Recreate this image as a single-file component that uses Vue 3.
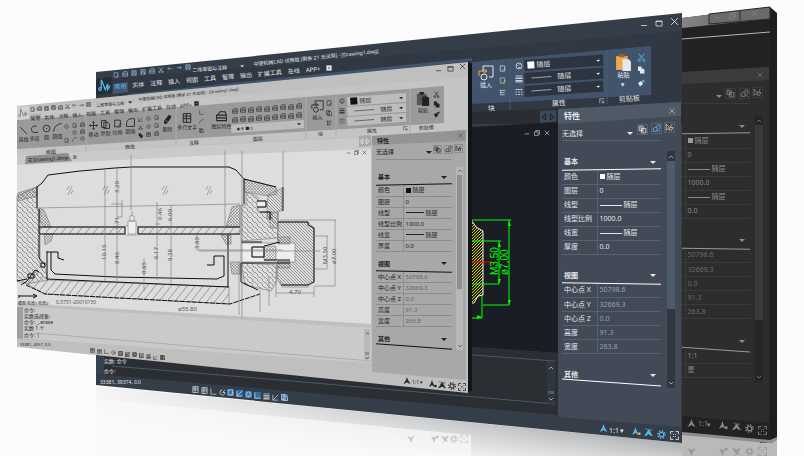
<template>
    <main>
        <svg class="scene" viewBox="0 0 804 456" role="img" aria-label="CAD">
            <defs>
                <linearGradient id="mirror" x1="0" y1="0" x2="1" y2="0">
                    <stop offset="0" stop-color="#f4f4f4" />
                    <stop offset="0.5" stop-color="#cfd0d1" />
                    <stop offset="1" stop-color="#a9abad" />
                </linearGradient>
                <linearGradient id="fade" gradientUnits="userSpaceOnUse" x1="389" y1="414" x2="385" y2="458">
                    <stop offset="0" stop-color="#fcfcfc" stop-opacity="0" />
                    <stop offset="1" stop-color="#fcfcfc" />
                </linearGradient>
                <linearGradient id="glass" x1="0" y1="0" x2="1" y2="0">
                    <stop offset="0" stop-color="#858585" />
                    <stop offset="1" stop-color="#5a5a5a" />
                </linearGradient>
                <pattern id="hatch" width="5" height="5" patternUnits="userSpaceOnUse">
                    <path d="M-1 1L4 6M1 -1L6 4" stroke="#666" stroke-width="0.6" />
                </pattern>
                <pattern id="wide" width="8" height="10" patternUnits="userSpaceOnUse">
                    <path d="M0 10L8 0M-4 5L0 0M4 15L8 10" stroke="#777" stroke-width="0.7" />
                </pattern>
                <pattern id="fine" width="3" height="3" patternUnits="userSpaceOnUse">
                    <path d="M0 0L3 3" stroke="#777" stroke-width="0.7" />
                </pattern>
                <pattern id="grain" width="3" height="3" patternUnits="userSpaceOnUse">
                    <path d="M0 3L3 0M0 0L3 3" stroke="#555" stroke-width="0.4" />
                </pattern>
                <pattern id="yellow" width="3" height="3" patternUnits="userSpaceOnUse">
                    <path d="M0 3L3 0M-1 1L1 -1M2 4L4 2" stroke="#e8e800" stroke-width="0.9" />
                </pattern>

                <symbol v-for="(d, id) in glyphs" :id="'i-' + id" :key="id" viewBox="0 0 16 16">
                    <path :d="d" fill="none" stroke="currentColor" stroke-width="1.5" />
                </symbol>
                <symbol id="i-insert" viewBox="0 0 16 16">
                    <path d="M5 7V1H15V12H11" fill="none" stroke="currentColor" />
                    <circle cx="6" cy="12" r="3" fill="none" stroke="currentColor" />
                    <path class="warm" d="M1 11V6H8M6 4L9 6L6 8" fill="none" />
                </symbol>
                <symbol id="i-paste" viewBox="0 0 16 16">
                    <path class="board" d="M1 2H12V15H1Z" />
                    <path class="clip" d="M4 0H9V3H4Z" />
                    <path d="M7 5H13L15 7V16H7Z" fill="currentColor" />
                </symbol>
                <symbol id="i-copy" viewBox="0 0 16 16">
                    <path d="M2 1H9V10H2Z" fill="currentColor" />
                    <path class="sheet" d="M6 5H12L15 8V15H6Z" fill="currentColor" />
                </symbol>
                <symbol id="i-brush" viewBox="0 0 16 16">
                    <path d="M2 8L8 4L12 10L6 15Z" fill="currentColor" />
                    <path class="tip" d="M9 4L14 1L15 4L12 8Z" />
                </symbol>
                <symbol id="i-eraser" viewBox="0 0 16 16">
                    <path d="M3 10L10 1L14 4L7 14L3 14Z" fill="currentColor" />
                    <path d="M5 9L9 12" stroke="#aaa" />
                </symbol>
                <symbol id="i-person" viewBox="0 0 16 16">
                    <path d="M8 0L10 6L15 14L10 12L8 10L6 12L1 14L6 6Z" fill="currentColor" />
                </symbol>
                <symbol id="i-personPlus" viewBox="0 0 16 16">
                    <path d="M6 0L8 6L12 14L8 12L6 10L4 12L0 14L4 6Z" fill="currentColor" />
                    <circle class="dot" cx="13" cy="12" r="2.5" />
                </symbol>
                <symbol id="i-personX" viewBox="0 0 16 16">
                    <path d="M8 3L15 14L10 12L8 10L6 12L1 14ZM2 1L14 5M14 1L8 7" fill="currentColor" stroke="currentColor" />
                </symbol>
                <symbol id="i-gear" viewBox="0 0 16 16">
                    <circle cx="8" cy="8" r="4" fill="none" stroke="currentColor" stroke-width="2" />
                    <circle cx="8" cy="8" r="6.5" fill="none" stroke="currentColor" stroke-width="2.5" stroke-dasharray="2.5 2.6" />
                </symbol>
                <symbol id="i-box" viewBox="0 0 16 16">
                    <path d="M1 1H15V15H1Z" fill="currentColor" />
                    <path d="M4 6H12L8 11Z" fill="#777" />
                </symbol>
            </defs>

            <!-- floor reflections -->
            <path d="M96 386L682 443V456H96Z" fill="url(#mirror)" />
            <path d="M682 433L777 440V456H682Z" fill="#b9b9b9" />
            <path d="M96 386L682 443V456H96Z" fill="url(#fade)" />
            <path d="M96 399L471 435V456H96Z" fill="#fafafa" fill-opacity="0.7" />
            <g class="ghost">
                <use v-for="(x, i) in [407, 431, 441, 450, 460]" :key="x" :href="'#i-' + status[i]"
                    :x="x" y="-443" width="8" height="8" transform="scale(1 -1)" />
                <use v-for="(x, i) in [687, 719, 732, 745, 758]" :key="x" :href="'#i-' + status[i]"
                    :x="x" y="-456" width="9" height="9" transform="scale(1 -1)" class="deep" />
            </g>

            <g v-for="win in windows" :key="win.name" :class="win.name">
                <path v-for="([kind, d], i) in win.shapes" :key="i" :class="kind" :d="d" />

                <!-- half-section of the part, light theme -->
                <g v-if="win.name === 'light'" class="drawing">
                    <path fill="url(#hatch)" d="M17 196L37 187V208L40 210V266L45 268L48 280L27 284L17 281Z" stroke="none" />
                    <path fill="url(#grain)" d="M18 193L37 187V196L18 201ZM39 208L44 210L51 227H44L39 220ZM44 234H53L51 241L45 245ZM226 227L232 207L240 205V227ZM221 235H231V244H226ZM230 262H240V274H232Z" />
                    <path fill="url(#wide)" d="M27 284L37 270L47 280L229 287V304L45 294Z" stroke="none" />
                    <path fill="url(#wide)" d="M39 227H240V234H39Z" stroke="none" />
                    <path fill="url(#grain)" d="M244 179L276 187L277 194L268 196L245 192Z" />
                    <path fill="url(#hatch)" d="M246 192L258 197V212H278V238L241 241V205H246ZM241 263L277 265V281L271 291L245 285Z" />
                    <path fill="url(#fine)" d="M268 195L282 188V211H278V228H270V212H267ZM278 222H308L314 228V282L308 285H281L277 278Z" />
                    <path fill="#eee" d="M241 243H295V262H241ZM252 247H264V257H252ZM257 201H266V207H257Z" />
                    <path fill="url(#grain)" d="M264 246H276V260H264ZM278 237H290V244H278ZM278 261H290V268H278ZM267 212H272V219H267Z" />
                    <path class="thick" d="M37 187L42 183L48 175L80 171L115 168L131 167H229L236 170L243 178M47 252H58V258L64 260M207 265H214V256H224V276L217 279L115 277L55 274L51 270V252" />
                    <path class="heavy" d="M37 186V208M39 209V227H240M39 234H240M39 227V234M39 235V258L45 265M47 251V279L229 287M228 235V287" />
                    <path class="heavy" d="M244 178V204M244 179L276 187M283 187V211M278 222H308V225L314 228V282L308 285H281M241 242H262M241 263H290M252 247H264V257H252ZM264 246L280 242M264 260H290M241 263V282L258 290M257 201H266V207H257M260 212H270V220M17 281L27 279M21 285L27 281L35 270L39 272" />
                    <path class="heavy dash" d="M26 285L45 294L230 304L260 294" />
                    <path d="M37 208L240 204M117 168V282M131 155V210M225 151V228M242 151V318M239 264V315M283 151V187M105 170V283M157 202V280M171 205V284M144 258V291M197 235V250H283M199 251H320M280 220H336M335 220V286H315M314 236H328M327 236V269H314M276 265V297M314 286V297M276 293H314M269 276V306M260 290V312M122 200V217H117M111 204H122M155 224H160" />
                    <path fill="#f6f6f6" stroke="#f6f6f6" d="M125 226H138V235H125Z" />
                    <path fill="#eee" d="M128 221H136V234H128ZM130 216H134V221H130ZM132 211V216" />
                    <path class="heavy" d="M125 227V234M138 227V234M19 295V298M19 296H36M33 294L37 296L33 298M28 274H34V278H28ZM41 263H45V267H41Z" />
                    <path v-for="x in [67, 103, 162, 206]" :key="x" :d="`M${x} 190l2 -4M${x + 1} 195l4 -9M${x + 4} 194l2 -4`" />
                    <path d="M280 281L282 287H308L312 281" />
                    <text v-for="[t, x, y] in sizes" :key="x + t" :transform="`translate(${x} ${y}) rotate(-90)`">{{ t }}</text>
                    <text x="178" y="311">ø55.80</text>
                    <text x="289" y="294">4.70</text>
                    <text class="code" x="56" y="304">0,5751-20010150</text>
                </g>

                <!-- same part, seen on the black canvas -->
                <g v-if="win.name === 'blue'" class="neon">
                    <path fill="url(#yellow)" stroke="#eee" d="M472 221L476 227L483 231V295L478 296L474 303H472" />
                    <path d="M472 220H511M509 220V305H483M472 241H501M499 241V284H472M482 296V318H472" />
                    <path fill="#0f0" stroke="none" d="M509 221L508 226H511ZM509 305L508 300H511ZM499 242L498 247H501ZM499 284L498 279H501ZM482 317L477 315V319Z" />
                    <path stroke="#f00" d="M472 262H492" />
                    <text transform="translate(498 275) rotate(-90)">M3.50</text>
                    <text transform="translate(508 275) rotate(-90)">ø7.00</text>
                </g>

                <foreignObject v-for="(tool, i) in win.tools" :key="i" :x="tool.x" :y="tool.y" :width="tool.s" :height="tool.s">
                    <button :class="['tool', tool.kind]" :aria-label="tool.label || tool.icon">
                        <svg :width="tool.s" :height="tool.s"><use :href="'#i-' + tool.icon" /></svg>
                        <span v-if="tool.label">{{ tool.label }}</span>
                    </button>
                </foreignObject>

                <text v-for="[t, x, y] in win.texts" :key="t + x + y" :transform="`translate(${x} ${y}) rotate(-4)`">{{ t }}</text>
                <text v-for="[t, x, y, kind] in win.notes" :key="t + x + y" :class="kind" :x="x" :y="y">{{ t }}</text>

                <template v-if="win.tabs">
                    <foreignObject :transform="`translate(${win.title.x} ${win.title.y}) rotate(-6)`" width="200" height="10">
                        <h1>中望机械CAD 试用版 [剩余 21 天试用] - [Drawing1.dwg]</h1>
                    </foreignObject>
                    <foreignObject :transform="`translate(${win.tabs.x} ${win.tabs.y}) rotate(-5)`" :width="win.tabs.w" height="10">
                        <nav>
                            <button v-for="(tab, i) in tabs" :key="tab" :class="{ current: i === 0 }">{{ tab }}</button>
                        </nav>
                    </foreignObject>
                    <foreignObject v-for="(box, i) in win.selects" :key="i" :width="box.w" :height="box.h"
                        :transform="`translate(${box.x} ${box.y}) rotate(-4)`">
                        <label class="pick" :class="box.mark">
                            <i></i>
                            <select :aria-label="box.label">
                                <option>{{ box.value }}</option>
                            </select>
                            <b></b>
                        </label>
                    </foreignObject>
                </template>

                <foreignObject :x="win.panel.x" :y="win.panel.y" :width="win.panel.w" height="300">
                    <section class="panel">
                        <div class="choice">
                            <select aria-label="选择">
                                <option>无选择</option>
                            </select>
                            <b></b>
                        </div>
                        <div v-for="group in groups" :key="group.name" class="group" :class="group.tilt">
                            <h2>{{ group.name }}<b></b></h2>
                            <table>
                                <tbody>
                                    <tr v-for="[key, value, mark] in group.rows" :key="key">
                                        <th>{{ key }}</th>
                                        <td :class="{ dim: group.dim }"><i v-if="mark" :class="mark"></i>{{ value }}</td>
                                    </tr>
                                </tbody>
                            </table>
                        </div>
                    </section>
                </foreignObject>
            </g>
        </svg>
    </main>
</template>

<script setup>
    const glyphs = {
        min: 'M2 13H14',
        max: 'M2 4H14V14H2ZM2 5H14',
        restore: 'M5 5V1H15V11H11M1 5H11V15H1Z',
        close: 'M2 2L14 14M14 2L2 14',
        line: 'M2 2L14 14',
        poly: 'M12 2C3 1 2 6 3 10C4 14 9 14 14 13',
        circle: 'M14 8A6 6 0 1 1 2 8A6 6 0 1 1 14 8M7 8H9M8 7V9',
        arc: 'M1 15C2 7 7 2 15 1',
        move: 'M8 1V15M1 8H15M6 3L8 1L10 3M6 13L8 15L10 13M3 6L1 8L3 10M13 6L15 8L13 10',
        pages: 'M1 1H9V13H1ZM5 4H12L15 7V15H5Z',
        corner: 'M1 15V8C2 3 6 1 15 1V15Z',
        cut: 'M3 1L11 11M13 1L5 11M2 13A2 2 0 1 0 6 13A2 2 0 1 0 2 13M10 13A2 2 0 1 0 14 13A2 2 0 1 0 10 13',
        layer: 'M3 5L6 1H13L15 5M1 6H15V14H1ZM1 10H15',
        palette: 'M14 8A6 6 0 1 1 2 8A6 6 0 1 1 14 8M5 7H7M9 5H11M6 11H11',
        weights: 'M1 2H15M1 6H15M1 7H15M1 11H15M1 12H15M1 14H15',
        dashes: 'M1 3H15M1 8H4M6 8H10M12 8H15M1 13H4M6 13H10M12 13H15',
        edit: 'M3 2H13V14H3ZM9 13L15 7',
        tree: 'M1 3H15M4 3V14M4 8H13M4 13H13',
        launch: 'M2 14V2H14M6 6L13 13M13 7V13H7',
        prev: 'M11 2V14L4 8Z',
        next: 'M5 2V14L12 8Z',
        filter: 'M2 2H9V10H2ZM6 6H14V14H6ZM4 4L10 12',
        pick: 'M2 13C1 7 5 5 9 5V13ZM8 2H14V9M10 9L14 14',
        quick: 'M2 2V13L5 10L9 13L7 7ZM13 2L9 8H14L11 14',
        grid: 'M2 1H14V15H2ZM2 5H14M2 9H14M7 1V15',
        ortho: 'M2 1V14H15',
        polar: 'M14 8A6 6 0 1 1 8 2M8 8L14 2M8 8H14',
        track: 'M2 14L14 2M2 2V14H14',
        save: 'M2 2H14V14H2ZM5 2V6H11V2M4 14V9H12V14',
        undo: 'M6 3L2 7L6 11M2 7H14',
        redo: 'M10 3L14 7L10 11M14 7H2',
        logo: 'M1 12C1 10 4 10 4 12C4 15 1 15 1 12M4 12V1L9 13L12 6L12 13L15 8',
        full: 'M6 1H1V6M10 1H15V6M6 15H1V10M10 15H15V10M5 5L7 7M11 5L9 7M5 11L7 9M11 11L9 9',
    }

    const status = ['person', 'personPlus', 'personX', 'gear', 'full']
    const tabs = ['常用', '实体', '注释', '插入', '视图', '工具', '管理', '输出', '扩展工具', '在线', 'APP+']

    const groups = [
        {
            name: '基本',
            tilt: 'rise',
            rows: [
                ['颜色', '随层', 'swatch'],
                ['图层', '0'],
                ['线型', '随层', 'long'],
                ['线型比例', '1000.0'],
                ['线宽', '随层', 'short'],
                ['厚度', '0.0'],
            ],
        },
        {
            name: '视图',
            tilt: 'sink',
            dim: true,
            rows: [
                ['中心点 X', '50798.6'],
                ['中心点 Y', '32669.3'],
                ['中心点 Z', '0.0'],
                ['高度', '91.3'],
                ['宽度', '263.8'],
            ],
        },
        { name: '其他', tilt: 'steep', rows: [['注释比例', '1:1'], ['打开..', '是']] },
    ]

    const sizes = [
        ['3.20', 119, 193], ['9.71', 119, 229], ['0.46', 162, 220], ['6.00', 172, 221],
        ['10.15', 106, 260], ['8.46', 119, 264], ['0.85', 146, 274], ['6.17', 158, 259],
        ['9.38', 172, 261], ['3.80', 199, 249], ['M3.50', 327, 264], ['ø7.00', 336, 264],
    ]

    // evenly spaced icons between two points
    const row = (icons, x, y, dx, dy, s, kind) =>
        icons.map((icon, i) => ({ icon, x: x + i * dx, y: Math.round(y + i * dy), s, kind }))

    const quickIcons = ['edit', 'layer', 'save', 'save', 'layer', 'cut', 'undo', 'redo', 'save']
    const snapIcons = ['grid', 'grid', 'ortho', 'polar', 'edit', 'track', 'palette', 'ortho', 'weights', 'track', 'pages']

    const windows = [
        {
            name: 'dark',
            shapes: [
                ['side', 'M770 7L777 13V437L772 443H760Z'],
                ['frame', 'M682 18L770 7V442L682 433Z'],
                ['glass', 'M682 18L770 7V19L682 28Z'],
                ['caps', 'M709 14L770 7V19L709 24ZM740 10V20'],
                ['hair', 'M682 39L770 32'],
                ['body', 'M682 72L769 67V423L682 416Z'],
                ['head', 'M682 72L769 67V80L682 84Z'],
                ['track', 'M755 116H763V382H755Z'],
                ['thumb', 'M755 125H763V320H755Z'],
                ['base', 'M682 432L770 440L772 439L777 437V440L772 443H768L682 435Z'],
                ['chev', 'M757 122L759 120L761 122M757 376L759 378L761 376'],
            ],
            tools: [
                { icon: 'min', x: 714, y: 12, s: 7 },
                { icon: 'restore', x: 729, y: 12, s: 7 },
                { icon: 'close', x: 751, y: 10, s: 7 },
                { icon: 'close', x: 757, y: 72, s: 6, kind: 'edge' },
                { icon: 'filter', x: 726, y: 89, s: 9, kind: 'edge' },
                { icon: 'pick', x: 740, y: 89, s: 9, kind: 'edge' },
                { icon: 'quick', x: 753, y: 88, s: 9, kind: 'edge' },
                { icon: 'person', x: 687, y: 419, s: 9 },
                { icon: 'personPlus', x: 719, y: 421, s: 9 },
                { icon: 'personX', x: 732, y: 422, s: 9 },
                { icon: 'gear', x: 745, y: 424, s: 9 },
                { icon: 'full', x: 758, y: 426, s: 9 },
            ],
            notes: [['1:1', 698, 426], ['▾', 707, 427]],
            panel: { x: 650, y: 89, w: 100 },
        },
        {
            name: 'blue',
            shapes: [
                ['frame', 'M96 72L682 13V443L96 385Z'],
                ['bar', 'M96 80L682 31V104L96 130Z'],
                ['on', 'M113 84L128 82V92L113 94Z'],
                ['logo', 'M96 79L112 77V93L96 95Z'],
                ['ribbon', 'M472 62L651 46V95L472 104ZM128 94L472 58V61L128 97Z'],
                ['strip', 'M472 112L682 103V124H472Z'],
                ['nav', 'M540 111L556 110V122L540 123Z'],
                ['canvas', 'M472 127L558 122V353L472 347Z'],
                ['command', 'M96 340L472 347L558 353V415L96 374Z'],
                ['gutter', 'M96 356H104V375L96 374Z'],
                ['hair', 'M112 366L280 380L555 404M472 355L555 361M510 59V110M607 50V104'],
                ['body', 'M558 109L681 102V427L558 417Z'],
                ['head', 'M558 109L681 102V116L558 124Z'],
                ['track', 'M667 151H675V388H667ZM547 361H555V404L547 403Z'],
                ['thumb', 'M667 161H675V309H667ZM548 391H554V394H548Z'],
                ['chev', 'M669 158L671 156L673 158M669 382L671 384L673 382M549 369L551 367L553 369M549 398L551 400L553 398'],
            ],
            tools: [
                { icon: 'logo', x: 98, y: 79, s: 13, kind: 'azure' },
                ...row(quickIcons, 113, 72, 9, -1, 6, 'quick'),
                { icon: 'box', x: 326, y: 65, s: 6 },
                { icon: 'min', x: 640, y: 19, s: 8 },
                { icon: 'max', x: 655, y: 19, s: 8 },
                { icon: 'close', x: 670, y: 17, s: 9 },
                { icon: 'insert', x: 478, y: 65, s: 16, label: '插入' },
                { icon: 'edit', x: 499, y: 65, s: 7 },
                { icon: 'edit', x: 499, y: 77, s: 7, kind: 'orange' },
                { icon: 'tree', x: 499, y: 89, s: 7 },
                ...row(['palette', 'weights', 'dashes'], 515, 62, 0, 13, 8),
                { icon: 'paste', x: 615, y: 54, s: 17, label: '粘贴' },
                { icon: 'cut', x: 637, y: 53, s: 9, kind: 'azure' },
                { icon: 'copy', x: 637, y: 66, s: 8 },
                { icon: 'brush', x: 637, y: 79, s: 8 },
                { icon: 'launch', x: 599, y: 98, s: 6 },
                { icon: 'prev', x: 540, y: 113, s: 8, kind: 'deep' },
                { icon: 'next', x: 548, y: 113, s: 8, kind: 'deep' },
                { icon: 'min', x: 524, y: 129, s: 6 },
                { icon: 'restore', x: 534, y: 130, s: 6 },
                { icon: 'close', x: 544, y: 130, s: 6 },
                { icon: 'close', x: 669, y: 108, s: 6, kind: 'edge' },
                { icon: 'filter', x: 638, y: 125, s: 9, kind: 'edge' },
                { icon: 'pick', x: 652, y: 124, s: 9, kind: 'edge azure' },
                { icon: 'quick', x: 665, y: 123, s: 9, kind: 'edge orange' },
                ...row(snapIcons.slice(0, 4), 192, 386, 9, 1, 7),
                ...row(snapIcons.slice(4, 8), 227, 389, 9, 1, 7, 'lit'),
                ...row(snapIcons.slice(8, 10), 263, 393, 9, 1, 7),
                { icon: 'pages', x: 281, y: 394, s: 7, kind: 'lit' },
                { icon: 'person', x: 599, y: 424, s: 9, kind: 'azure' },
                { icon: 'personPlus', x: 632, y: 427, s: 9, kind: 'azure' },
                { icon: 'personX', x: 644, y: 428, s: 9, kind: 'azure' },
                { icon: 'gear', x: 657, y: 430, s: 9, kind: 'azure' },
                { icon: 'full', x: 670, y: 431, s: 9 },
            ],
            texts: [['块', 488, 111], ['属性', 552, 106], ['剪贴板', 619, 102], ['▾', 621, 87]],
            notes: [
                ['特性', 564, 119, 'caption'], ['1:1', 609, 433], ['▾', 620, 433],
                ['命令:', 104, 373, 'code'], ['实数: 命令', 104, 363, 'code'], ['33381, 39374, 0.0', 100, 384, 'code'],
            ],
            title: { x: 253, y: 60 },
            tabs: { x: 114, y: 83, w: 220 },
            selects: [
                { x: 190, y: 66, w: 54, h: 8, value: '二维草图与注释', label: '工作空间', mark: 'clear' },
                { x: 524, y: 60, w: 79, h: 11, value: '随层', label: '颜色', mark: 'swatch' },
                { x: 524, y: 73, w: 79, h: 11, value: '随层', label: '线宽', mark: 'rule' },
                { x: 524, y: 86, w: 79, h: 11, value: '随层', label: '线型', mark: 'rule' },
            ],
            panel: { x: 562, y: 126, w: 99 },
        },
        {
            name: 'light',
            shapes: [
                ['shade', 'M468 62L472 64V390L468 393Z'],
                ['frame', 'M17 106L468 62V393L17 347Z'],
                ['bar', 'M17 112L468 77V130L17 155Z'],
                ['ribbon', 'M17 120L444 86V123L17 149Z'],
                ['on', 'M30 115L41 114V121L30 122Z'],
                ['logo', 'M17 107L29 106V119L17 120Z'],
                ['hair', 'M86 115V151M176 108V146M306 98V138M336 96V136M410 89V133'],
                ['strip', 'M17 155L371 137V150L17 165Z'],
                ['tab', 'M26 156L68 153L72 161L25 164Z'],
                ['nav', 'M359 136L371 135V146L359 147Z'],
                ['canvas', 'M17 165L240 154L371 149V324L17 303Z'],
                ['command', 'M17 306L371 328V363L17 338Z'],
                ['gutter', 'M17 307H23V339L17 338Z'],
                ['hair', 'M35 333L371 361'],
                ['body', 'M372 136L466 130V380L372 372Z'],
                ['head', 'M372 136L466 130V141L372 145Z'],
                ['track', 'M456 167H463V350H456ZM364 329H370V362H364Z'],
                ['thumb', 'M457 175H462V289H457ZM365 352H369V355H365Z'],
                ['chev', 'M458 172L460 170L462 172M458 345L460 347L462 345M366 334L367 333L369 334M366 357L367 359L369 357'],
            ],
            tools: [
                { icon: 'logo', x: 18, y: 108, s: 10, kind: 'pale' },
                ...row(quickIcons, 30, 107, 7, -0.6, 5),
                { icon: 'box', x: 194, y: 101, s: 5 },
                { icon: 'min', x: 435, y: 65, s: 7 },
                { icon: 'max', x: 447, y: 65, s: 7 },
                { icon: 'close', x: 459, y: 63, s: 7 },
                { icon: 'line', x: 19, y: 126, s: 9, label: '直线' },
                { icon: 'poly', x: 30, y: 125, s: 9, label: '多段' },
                { icon: 'circle', x: 42, y: 124, s: 9, label: '圆' },
                { icon: 'arc', x: 53, y: 123, s: 9, label: '圆弧' },
                ...row(['circle', 'edit', 'layer'], 64, 124, 8, -1, 5),
                ...row(['circle', 'layer'], 72, 130, 8, -1, 5),
                ...row(['edit', 'arc', 'circle'], 64, 138, 8, -1, 5),
                { icon: 'move', x: 89, y: 121, s: 9, label: '移动' },
                { icon: 'pages', x: 101, y: 120, s: 9, label: '复制' },
                { icon: 'edit', x: 113, y: 119, s: 9, label: '拉伸' },
                { icon: 'corner', x: 126, y: 118, s: 9, label: '圆角' },
                ...row(['track', 'circle', 'edit'], 138, 117, 8, -1, 5),
                ...row(['cut', 'circle', 'edit'], 138, 125, 8, -1, 5),
                ...row(['copy', 'grid', 'layer'], 138, 133, 8, -1, 5),
                { icon: 'eraser', x: 162, y: 114, s: 11, label: '删除' },
                { icon: 'grid', x: 182, y: 113, s: 10, label: '多行文字' },
                ...row(['ortho', 'arc', 'pages'], 199, 110, 0, 9, 5),
                { icon: 'layer', x: 216, y: 111, s: 11, label: '图层特性' },
                ...row(Array(9).fill('layer'), 232, 108, 8, -0.6, 6),
                ...row(Array(9).fill('layer'), 232, 117, 8, -0.6, 6),
                { icon: 'insert', x: 311, y: 100, s: 13, label: '插入' },
                ...row(['edit', 'pages', 'tree'], 326, 100, 0, 10, 6),
                ...row(['palette', 'weights', 'dashes'], 339, 98, 0, 10, 6),
                { icon: 'paste', x: 416, y: 92, s: 14, label: '粘贴' },
                { icon: 'cut', x: 433, y: 91, s: 7 },
                { icon: 'copy', x: 433, y: 101, s: 7 },
                { icon: 'brush', x: 433, y: 111, s: 7 },
                { icon: 'launch', x: 403, y: 126, s: 5 },
                { icon: 'prev', x: 358, y: 138, s: 7, kind: 'white' },
                { icon: 'next', x: 364, y: 138, s: 7, kind: 'white' },
                { icon: 'min', x: 346, y: 149, s: 5 },
                { icon: 'restore', x: 354, y: 150, s: 5 },
                { icon: 'close', x: 362, y: 150, s: 5 },
                { icon: 'close', x: 458, y: 133, s: 5, kind: 'edge' },
                { icon: 'pages', x: 73, y: 155, s: 4 },
                { icon: 'filter', x: 434, y: 146, s: 7, kind: 'edge' },
                { icon: 'pick', x: 445, y: 146, s: 7, kind: 'edge' },
                { icon: 'quick', x: 455, y: 145, s: 7, kind: 'edge' },
                ...row(snapIcons.slice(0, 4), 90, 348, 7, 0.7, 5),
                ...row(snapIcons.slice(4, 8), 118, 351, 7, 0.6, 5, 'lit'),
                ...row(snapIcons.slice(8, 10), 146, 354, 7, 0.7, 5),
                { icon: 'pages', x: 160, y: 355, s: 5, kind: 'lit' },
                { icon: 'person', x: 403, y: 377, s: 8 },
                { icon: 'personPlus', x: 429, y: 380, s: 8 },
                { icon: 'personX', x: 438, y: 381, s: 8 },
                { icon: 'gear', x: 448, y: 382, s: 8 },
                { icon: 'full', x: 458, y: 383, s: 8 },
            ],
            texts: [
                ['绘图', 46, 154], ['修改', 125, 149], ['注释', 189, 145], ['图层', 253, 141],
                ['块', 318, 136], ['属性', 367, 133], ['剪贴板', 419, 130], ['☰ Drawing1.dwg', 28, 162], ['×', 66, 160],
            ],
            notes: [
                ['特性', 377, 143, 'caption'], ['1:1', 412, 384], ['▾', 420, 384],
                ['模型 布局1 布局2', 18, 305, 'tiny'], ['命令:', 24, 312], ['实数选择集:', 24, 318],
                ['命令: _.erase', 24, 324], ['实数 1 个', 24, 330], ['命令: |', 24, 337], ['33381, 4357, 0.0', 20, 346, 'tiny'],
            ],
            title: { x: 138, y: 96 },
            tabs: { x: 30, y: 115, w: 180 },
            selects: [
                { x: 94, y: 102, w: 38, h: 6, value: '二维草图与注释', label: '工作空间', mark: 'clear' },
                { x: 231, y: 125, w: 73, h: 8, value: '☀ ❄ ■ 0', label: '图层', mark: 'plain' },
                { x: 347, y: 97, w: 59, h: 9, value: '随层', label: '颜色', mark: 'swatch' },
                { x: 347, y: 107, w: 59, h: 9, value: '随层', label: '线宽', mark: 'rule' },
                { x: 347, y: 117, w: 59, h: 9, value: '随层', label: '线型', mark: 'rule' },
            ],
            panel: { x: 376, y: 145, w: 76 },
        },
    ]
</script>

<style>
    body {
        background: #fcfcfc;
    }
</style>

<style scoped>
    .scene {
        display: block;
        width: 100%;
        overflow: hidden;
        font-family: "Noto Sans", "Noto Sans CJK SC", sans-serif;
    }

    foreignObject {
        overflow: visible;
    }

    .ghost {
        color: #c4c4c4;
    }

    .ghost .deep {
        color: #989898;
    }

    .dark {
        --ink: #8a8a8a;
        --dim: #6a6a6a;
        --line: #3a3a3a;
        --rule: #999;
        --row: 14px;
        --size: 7px;
        --key: 35px;
        color: #8a8a8a;
    }

    .blue {
        --ink: #e4e8ec;
        --dim: #9aa4ae;
        --line: #56616d;
        --rule: #fff;
        --field: #2b343f;
        --row: 14px;
        --size: 7px;
        --small: 6px;
        --title: 5px;
        --gap: 6px;
        --key: 35px;
        color: #e4e8ec;
    }

    .light {
        --ink: #222;
        --dim: #666;
        --line: #8d8d8d;
        --rule: #111;
        --field: #bdbdbd;
        --row: 11px;
        --size: 6px;
        --small: 5px;
        --title: 4px;
        --gap: 4px;
        --key: 27px;
        color: #222;
    }

    text {
        fill: var(--ink);
        font-size: var(--size);
    }

    .light text {
        font-size: 5px;
    }

    .light .tiny {
        font-size: 4px;
    }

    .blue .code {
        font-size: 5px;
    }

    .blue .caption {
        font-size: 8px;
        font-weight: 700;
    }

    .light .caption {
        font-size: 6px;
        font-weight: 700;
    }

    .light .drawing text {
        fill: #555;
        font-size: 6px;
    }

    .light .drawing .code {
        font-size: 5px;
    }

    .drawing path {
        stroke: #777;
        stroke-width: 0.6;
    }

    .drawing path:not([fill]) {
        fill: none;
    }

    .drawing .heavy,
    .drawing .thick {
        stroke: #111;
        stroke-width: 1;
    }

    .drawing .dash {
        stroke-dasharray: 5 1;
    }

    .neon path:not([fill]) {
        fill: none;
    }

    .neon path:not([stroke]) {
        stroke: #0f0;
    }

    .neon text {
        fill: #0f0;
        font-family: "Liberation Sans", sans-serif;
        font-size: 10px;
    }

    .dark .side { fill: #1f1f1f; }
    .dark .frame { fill: #222; }
    .dark .glass { fill: url("#glass"); }
    .dark .caps { fill: #6a6a6a; stroke: #2a2a2a; }
    .dark .hair { stroke: #b5b5b5; fill: none; }
    .dark .body { fill: #2d2d2d; }
    .dark .head { fill: #3c3c3c; }
    .dark .track { fill: #252525; }
    .dark .thumb { fill: #393939; }
    .dark .base { fill: #8d8d8d; }

    .blue .frame { fill: #343d48; }
    .blue .bar { fill: #303843; }
    .blue .on { fill: #45586f; }
    .blue .logo { fill: #252d37; }
    .blue .ribbon { fill: #42546c; }
    .blue .strip { fill: #2a2e33; }
    .blue .nav { fill: #3b4956; }
    .blue .canvas { fill: #1a1e24; }
    .blue .command { fill: #2b2f34; }
    .blue .gutter { fill: #37424f; }
    .blue .hair { stroke: #4a5a68; fill: none; }
    .blue .body { fill: #414a56; }
    .blue .head { fill: #4f5a66; }
    .blue .track { fill: #30373f; }
    .blue .thumb { fill: #4e5b68; }

    .light .shade { fill: #12161a; }
    .light .frame { fill: #bfbfbf; }
    .light .bar { fill: #c4c4c4; }
    .light .on { fill: #a2a2a2; }
    .light .logo { fill: #d2d2d2; }
    .light .ribbon { fill: #9a9a9a; }
    .light .strip { fill: #cacaca; }
    .light .tab { fill: #8e8e8e; }
    .light .nav { fill: #a8a8a8; }
    .light .canvas { fill: #ddd; }
    .light .command { fill: #cacaca; }
    .light .gutter { fill: #a0a0a0; }
    .light .hair { stroke: #adadad; fill: none; }
    .light .body { fill: #a8a8a8; }
    .light .head { fill: #949494; }
    .light .track { fill: #b8b8b8; }
    .light .thumb { fill: #8f8f8f; }

    .chev {
        fill: none;
        stroke: var(--dim);
    }

    button {
        border: 0;
        padding: 0;
        background: none;
        color: inherit;
        font-family: inherit;
    }

    .tool {
        display: flex;
        flex-flow: column;
        align-items: center;
        width: 100%;

        > svg {
            display: block;
            flex: none;
        }

        > span {
            font-size: var(--small);
            line-height: 8px;
            white-space: nowrap;
        }
    }

    .edge {
        box-shadow: 0 0 0 1px var(--line);
    }

    .azure { color: #55bdf2; }
    .orange { color: #e3c48c; }
    .white { color: #fff; }
    .pale { color: #888; }
    .blue .deep { color: #12171c; }
    .blue .quick { color: #a9cbe6; }
    .blue .lit { background: #2d6ea6; }
    .light .lit { background: #858585; }

    /* symbol colours follow the theme of the window that uses them */
    .blue {
        --warm: #f0a63a;
        --board: #e9a94f;
        --clip: #a85a1c;
        --tip: #55bdf2;
    }

    .light {
        --warm: #222;
        --board: #555;
        --clip: #222;
        --tip: #222;
    }

    .warm { stroke: var(--warm); }
    .board { fill: var(--board); }
    .clip { fill: var(--clip); }
    .tip { fill: var(--tip); }
    .dot { fill: var(--warm, currentColor); }

    h1 {
        margin: 0;
        font-size: var(--title);
        font-weight: 400;
        line-height: 8px;
        white-space: nowrap;
    }

    nav {
        display: flex;
        gap: var(--gap);

        > button {
            font-size: var(--small);
            line-height: 8px;
            white-space: nowrap;
        }
    }

    .blue .current {
        color: #55bdf2;
    }

    select {
        appearance: none;
        border: 0;
        padding: 0;
        flex: 1;
        min-width: 0;
        background: none;
        color: var(--ink);
        font-family: inherit;
        font-size: var(--size);
    }

    b {
        border: 3px solid transparent;
        border-top-color: var(--ink);
        border-bottom: 0;
    }

    .pick {
        display: flex;
        align-items: center;
        gap: 2px;
        height: 100%;
        padding: 0 3px;
        box-sizing: border-box;
        background: var(--field);

        > b {
            border-width: 2px 2px 0;
        }

        > select {
            height: 100%;
        }
    }

    .clear {
        padding: 0;
        background: none;
    }

    .clear select,
    .plain select {
        font-size: var(--title);
    }

    .pick.swatch i {
        width: 7px;
        height: 7px;
        background: var(--rule);
    }

    .pick.rule i {
        width: 20px;
        margin: 0 4px;
        border-top: 1px solid var(--dim);
    }

    .choice {
        display: flex;
        align-items: center;
        height: 14px;
        padding-right: 28px;
        border-bottom: 1px solid var(--line);
    }

    .light .choice {
        margin-bottom: 1px;
        padding-right: 20px;
    }

    .group {
        padding-top: 17px;
    }

    .light .group {
        padding-top: 8px;
    }

    .light .group.rise {
        padding-top: 12px;
    }

    .dark .group {
        padding-top: 18px;
    }

    h2 {
        display: flex;
        align-items: center;
        justify-content: space-between;
        position: relative;
        height: 12px;
        margin: 0;
        padding: 0 5px 4px 2px;
        box-sizing: border-box;
        color: var(--ink);
        font-size: var(--size);
        font-weight: 700;
        line-height: 8px;
    }

    h2::after {
        content: "";
        position: absolute;
        inset: auto 0 0 0;
        border-bottom: 1px solid var(--rule);
    }

    .rise h2::after { transform: skewY(-1deg); }
    .sink h2::after { transform: skewY(1deg); }
    .steep h2::after { transform: skewY(4deg); }

    .blue .steep table,
    .light .steep table {
        display: none;
    }

    table {
        width: 100%;
        table-layout: fixed;
        border-collapse: collapse;
        font-size: var(--size);
    }

    tr {
        height: var(--row);
    }

    th,
    td {
        padding: 0 0 0 2px;
        border-bottom: 1px solid var(--line);
        color: var(--ink);
        font-weight: 400;
        line-height: 10px;
        text-align: left;
        white-space: nowrap;
    }

    th {
        width: var(--key);
        box-sizing: border-box;
        border-right: 1px solid var(--line);
    }

    td.dim {
        color: var(--dim);
    }

    td i {
        display: inline-block;
        margin-right: 2px;
        vertical-align: middle;
    }

    td .swatch {
        width: 5px;
        height: 5px;
        background: var(--rule);
    }

    td .long,
    td .short {
        width: 22px;
        border-top: 1px solid var(--ink);
    }

    .light td .long,
    .light td .short {
        width: 18px;
    }
</style>
